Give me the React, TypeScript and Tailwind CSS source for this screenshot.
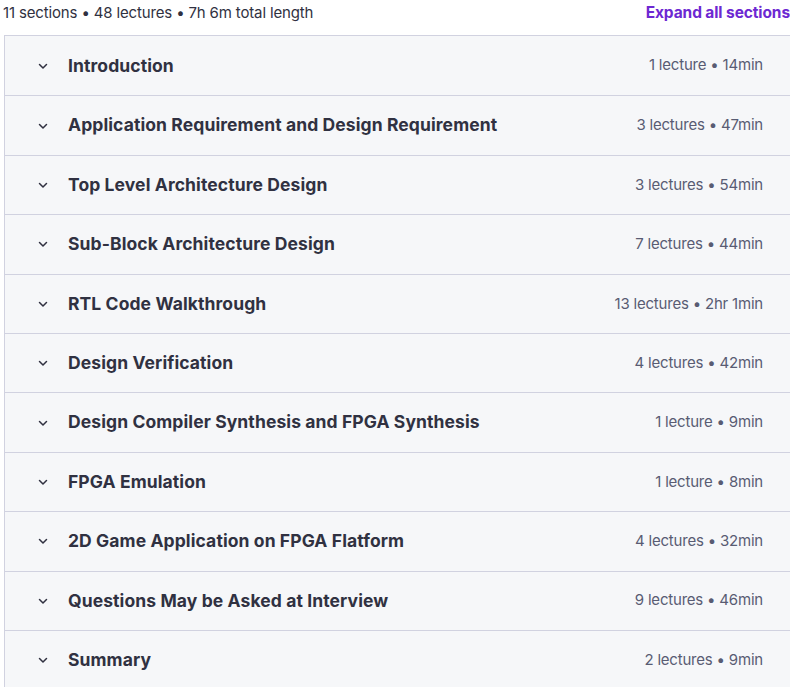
const sections = [
  { title: 'Introduction', meta: '1 lecture • 14min' },
  { title: 'Application Requirement and Design Requirement', meta: '3 lectures • 47min' },
  { title: 'Top Level Architecture Design', meta: '3 lectures • 54min' },
  { title: 'Sub-Block Architecture Design', meta: '7 lectures • 44min' },
  { title: 'RTL Code Walkthrough', meta: '13 lectures • 2hr 1min' },
  { title: 'Design Verification', meta: '4 lectures • 42min' },
  { title: 'Design Compiler Synthesis and FPGA Synthesis', meta: '1 lecture • 9min' },
  { title: 'FPGA Emulation', meta: '1 lecture • 8min' },
  { title: '2D Game Application on FPGA Flatform', meta: '4 lectures • 32min' },
  { title: 'Questions May be Asked at Interview', meta: '9 lectures • 46min' },
  { title: 'Summary', meta: '2 lectures • 9min' },
]

function Chevron() {
  return (
    <svg className="w-[12px] h-[12px] text-[#303141]" viewBox="0 0 24 24" fill="none" stroke="currentColor">
      <path strokeWidth={3} strokeLinecap="round" strokeLinejoin="round" d="M5 9l7 7 7-7" />
    </svg>
  )
}

export default function App() {
  return (
    <div className="w-[790px] h-[687px] overflow-hidden bg-white font-['Inter',sans-serif]">
      {/* Summary bar */}
      <div className="flex items-center justify-between h-[26px] pl-[3px]">
        <span className="text-[15px] text-[#303141] tracking-[-0.15px]">
          11 sections • 48 lectures • 7h 6m total length
        </span>
        <button type="button" className="text-[15.5px] font-bold text-[#6d28d2] tracking-[-0.1px]">
          Expand all sections
        </button>
      </div>

      {/* Section list */}
      <div className="mt-[9px] ml-[4px] w-[790px] border border-[#d1d2e0]">
        {sections.map((s, i) => (
          <div
            key={s.title}
            className={`flex items-center h-[59.4px] bg-[#f6f7f9] pl-[32px] pr-[30px] ${
              i > 0 ? 'border-t border-[#d1d2e0]' : ''
            }`}
          >
            <Chevron />
            <span className="ml-[19px] text-[17.5px] font-bold text-[#303141] tracking-[0.1px] flex-1">
              {s.title}
            </span>
            <span className="text-[15px] text-[#595c73] tracking-[-0.2px]">{s.meta}</span>
          </div>
        ))}
      </div>
    </div>
  )
}
